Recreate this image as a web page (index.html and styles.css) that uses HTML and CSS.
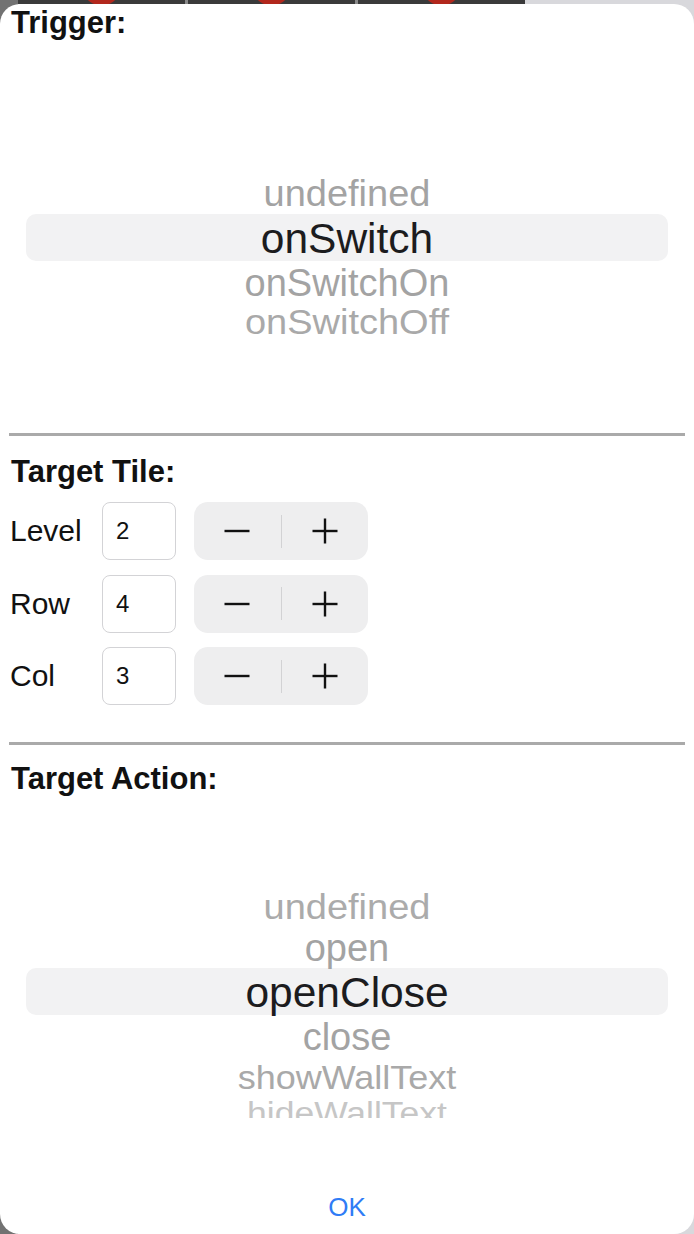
FILE: index.html
```html
<!DOCTYPE html>
<html lang="en">
<head>
<meta charset="utf-8">
<title>Switch Trigger</title>
<link rel="stylesheet" href="styles.css">
</head>
<body>
<div class="strip">
  <div class="tile"></div><div class="sep"></div><div class="tile"></div><div class="sep"></div><div class="tile"></div>
</div>
<main class="sheet">
  <h2 class="title">Trigger:</h2>
  <div class="picker picker-trigger">
    <div class="opt t-m1">undefined</div>
    <div class="opt sel">onSwitch</div>
    <div class="opt t-p1">onSwitchOn</div>
    <div class="opt t-p2">onSwitchOff</div>
  </div>
  <div class="divider"></div>
  <h2 class="title title-tile">Target Tile:</h2>
  <div class="rows">
    <div class="row">
      <span class="label">Level</span>
      <span class="field">2</span>
      <div class="stepper">
        <span class="step"><svg width="26" height="26" viewBox="0 0 26 26"><line x1="0.5" y1="13" x2="25.5" y2="13"/></svg></span>
        <span class="step-sep"></span>
        <span class="step"><svg width="26" height="26" viewBox="0 0 26 26"><line x1="0.5" y1="13" x2="25.5" y2="13"/><line x1="13" y1="0.5" x2="13" y2="25.5"/></svg></span>
      </div>
    </div>
    <div class="row">
      <span class="label">Row</span>
      <span class="field">4</span>
      <div class="stepper">
        <span class="step"><svg width="26" height="26" viewBox="0 0 26 26"><line x1="0.5" y1="13" x2="25.5" y2="13"/></svg></span>
        <span class="step-sep"></span>
        <span class="step"><svg width="26" height="26" viewBox="0 0 26 26"><line x1="0.5" y1="13" x2="25.5" y2="13"/><line x1="13" y1="0.5" x2="13" y2="25.5"/></svg></span>
      </div>
    </div>
    <div class="row">
      <span class="label">Col</span>
      <span class="field">3</span>
      <div class="stepper">
        <span class="step"><svg width="26" height="26" viewBox="0 0 26 26"><line x1="0.5" y1="13" x2="25.5" y2="13"/></svg></span>
        <span class="step-sep"></span>
        <span class="step"><svg width="26" height="26" viewBox="0 0 26 26"><line x1="0.5" y1="13" x2="25.5" y2="13"/><line x1="13" y1="0.5" x2="13" y2="25.5"/></svg></span>
      </div>
    </div>
  </div>
  <div class="divider divider-2"></div>
  <h2 class="title title-action">Target Action:</h2>
  <div class="picker picker-action">
    <div class="opt a-m2">undefined</div>
    <div class="opt a-m1">open</div>
    <div class="opt sel">openClose</div>
    <div class="opt a-p1">close</div>
    <div class="opt a-p2">showWallText</div>
    <div class="opt a-p3">hideWallText</div>
  </div>
  <div class="ok">OK</div>
</main>
</body>
</html>
```
FILE: styles.css
```css
* { box-sizing: border-box; }
html, body { margin: 0; padding: 0; }
body {
  width: 694px;
  height: 1234px;
  overflow: hidden;
  background: linear-gradient(90deg, #727272 0 18px, #d8d8dc 18px);
  font-family: "Liberation Sans", Arial, sans-serif;
  color: #111;
}
.strip {
  display: flex;
  height: 4px;
  padding-left: 18px;
}
.tile {
  width: 167px;
  background: radial-gradient(circle at 50% -14px, #b2271d 0 19px, #3a3a3a 20px);
}
.sep { width: 3px; background: #8a8a8a; }
.sheet {
  height: 1230px;
  background: #fff;
  border-radius: 20px;
  padding: 0 9px;
  display: flex;
  flex-direction: column;
}
.title {
  margin: 1px 0 0;
  padding-left: 2px;
  font-size: 31px;
  line-height: 36px;
  font-weight: 700;
  color: #111;
}
.title-tile { margin-top: 18px; }
.title-action { margin-top: 16px; }
.picker {
  flex: none;
  overflow: hidden;
  text-align: center;
}
.picker-trigger { height: 392px; padding-top: 129px; }
.picker-action { height: 321px; padding-top: 87px; }
.opt {
  font-size: 38px;
  color: #a3a3a3;
  white-space: nowrap;
}
.sel {
  font-size: 42.5px;
  color: #1c1c1e;
  background: #f2f2f3;
  border-radius: 10px;
  margin: 0 17px;
  height: 47px;
  line-height: 49px;
}
.t-m1 { height: 44px; line-height: 48px; transform: scaleY(0.95); }
.t-p1 { height: 44px; line-height: 44px; }
.t-p2 { height: 35px; line-height: 35px; transform: scaleY(0.92); color: #a9a9a9; }
.a-m2 { height: 40px; line-height: 46px; transform: scaleY(0.93); color: #ababab; }
.a-m1 { height: 44px; line-height: 48px; }
.a-p1 { height: 44px; line-height: 44px; }
.a-p2 { height: 37px; line-height: 37px; font-size: 36px; transform: scaleY(0.93); color: #a9a9a9; }
.a-p3 { height: 35px; line-height: 35px; font-size: 35.5px; transform: scaleY(0.88); color: #c6c6c6; }
.divider {
  flex: none;
  height: 3px;
  background: #aaaaaa;
}
.divider-2 { margin-top: 37px; }
.rows {
  display: flex;
  flex-direction: column;
  gap: 14.5px;
  margin-top: 12px;
}
.row {
  display: flex;
  align-items: center;
  height: 58px;
}
.label {
  width: 93px;
  padding-left: 1px;
  font-size: 30px;
  line-height: 58px;
  color: #111;
}
.field {
  width: 74px;
  height: 58px;
  border: 1px solid #d3d3d6;
  border-radius: 8px;
  padding-left: 13px;
  font-size: 24px;
  line-height: 56px;
  color: #111;
}
.stepper {
  margin-left: 18px;
  width: 174px;
  height: 58px;
  background: #eeeeef;
  border-radius: 14px;
  display: flex;
  align-items: center;
}
.step {
  flex: 1;
  display: flex;
  justify-content: center;
  align-items: center;
}
.step svg { display: block; }
.step line { stroke: #111; stroke-width: 2.4; }
.step-sep {
  width: 1px;
  height: 33px;
  background: #d2d2d4;
}
.ok {
  margin-top: 74px;
  text-align: center;
  font-size: 26px;
  line-height: 30px;
  color: #2f7cf6;
}
```
